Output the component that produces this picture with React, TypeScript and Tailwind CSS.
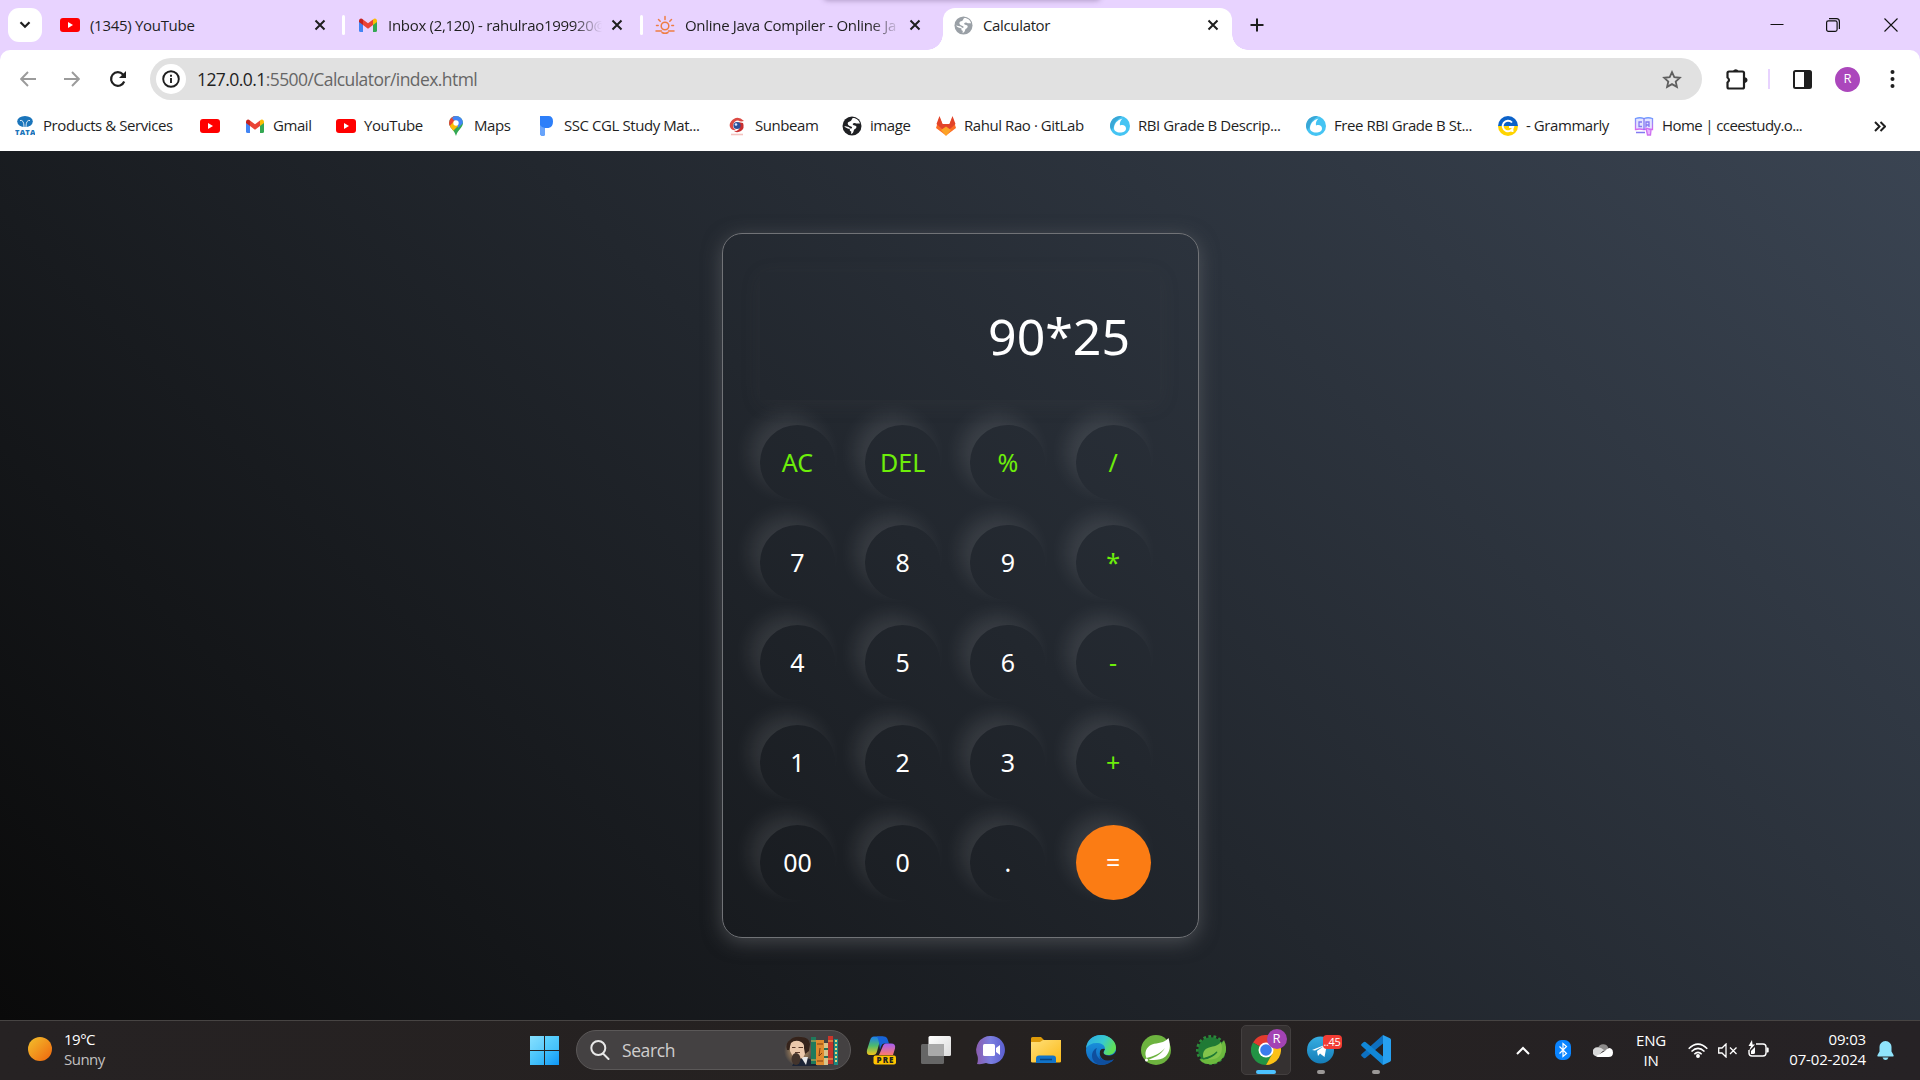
import type { ReactNode } from "react";

const YouTube = () => (
  <svg width="20" height="20" viewBox="0 0 20 20"><rect y="3" width="20" height="14" rx="3" fill="#f00" /><path d="M8 7l5 3-5 3z" fill="#fff" /></svg>
);
const Gmail = () => (
  <svg width="20" height="20" viewBox="0 0 20 20">
    <path d="M1 6v9.500q0 1.500 1.500 1.500H5V9z" fill="#4285f4" />
    <path d="M19 6v9.500q0 1.500-1.500 1.500H15V9z" fill="#34a853" />
    <path d="M5 4.500V10l5 3.700L15 10V4.500l-5 3.800z" fill="#ea4335" />
    <path d="M1 6v1l4 3V4.500C3 2.500 1 4 1 6z" fill="#c5221f" />
    <path d="M19 6v1l-4 3V4.500c2-2 4-.5 4 1.500z" fill="#fbbc04" />
  </svg>
);
const Globe = ({ c, size = 19 }: { c: string; size?: number }) => (
  <svg width={size} height={size} viewBox="0 0 20 20">
    <circle cx="10" cy="10" r="9.500" fill={c} />
    <path d="M11 2c3.500 0 6.300 2.500 7 5.500h-3.500c-.8 0-1.300-.7-2-.6-1.300.2-2 .8-1.700 1.600.3.900 1.700.9 2.700 1.300 1.300.5 1.200 2 .2 2.800-.8.600-1.700 1-1.900 2-.3 1.300-1 3.300-2.800 3.300l.3-2.500c-1.600.2-1.600-1.500-1.500-2.600-1.500.1-4.500-.8-5.600-2.800 1.700.6 3.200.6 4.300.9 1.500.4 1.300 1.600 2.800 1.600.8 0 1.100-1.300.3-1.700-1.500-.7-3.600-1.200-3.900-3C5.500 5.700 7.500 5.800 8.700 5 10 4.200 9.500 2.500 11 2z" fill="#fff" />
  </svg>
);
const JavaSun = () => (
  <svg width="20" height="20" viewBox="0 0 20 20" fill="none" stroke="#ee7d43" strokeWidth="1.500" strokeLinecap="round">
    <circle cx="10" cy="11" r="3.800" />
    <path d="M1 16h5.500M13.500 16H19M7 17.500q3 1.500 6 0M10 1.500v3M3.500 4.500l1.700 1.700M16.500 4.500l-1.700 1.700M1.500 10.500h1.700M16.800 10.500h1.700" />
  </svg>
);
const Tata = () => (
  <svg width="20" height="20" viewBox="0 0 20 20">
    <ellipse cx="10" cy="5.500" rx="7.800" ry="5.500" fill="#1b75bb" />
    <path d="M5 4.500q4-1 4 6.500M15 4.500q-4-1-4 6.500" stroke="#dbeaf6" strokeWidth="1" fill="none" />
    <text x="0" y="18.500" fontSize="7.500" fontWeight="900" textLength="20" fill="#1b75bb" fontFamily="Open Sans, sans-serif">TATA</text>
  </svg>
);
const MapsPin = () => (
  <svg width="20" height="20" viewBox="0 0 20 20">
    <defs><clipPath id="pin"><path d="M10 0a7 7 0 0 1 7 7c0 4.500-5.500 7-7 13-1.500-6-7-8.500-7-13a7 7 0 0 1 7-7z" /></clipPath></defs>
    <g clipPath="url(#pin)">
      <rect width="20" height="20" fill="#34a853" />
      <path d="M0 0h10l0 7-8 9z" fill="#ea4335" />
      <path d="M8 0h12v4L12 12 10 7 6 2z" fill="#4285f4" />
      <path d="M3 11l6-7 3 6-6 6z" fill="#fbbc04" />
    </g>
    <circle cx="10" cy="7" r="2.700" fill="#fff" />
  </svg>
);
const PMark = () => (
  <svg width="20" height="20" viewBox="0 0 20 20"><path d="M4 0h8.500q4.500 0 4.500 5.500T12.500 12H9v6q0 2-2 2-3 0-3-3z" fill="#2d7ff9" /><path d="M4 9q2 3 5 3v6q0 2-2 2-3 0-3-3z" fill="#68a4fb" /></svg>
);
const Sunbeam = () => (
  <svg width="20" height="20" viewBox="0 0 20 20">
    <path d="M4 5.500Q10-1.500 17 5q-3 1-6-.5-4 0-5 5 0 3 3 4.500-4 1-6-3-1-3 1-5.500z" fill="#dc4a43" />
    <path d="M16 7q2 5-2 8-3 2-7 .5 5-.5 6-5 0-3-2-4.500z" fill="#c92f30" />
    <circle cx="10" cy="9.500" r="3.600" fill="#2c4f99" /><circle cx="9" cy="8.500" r="1.300" fill="#dbe6ff" />
    <path d="M4 18.500h12" stroke="#f4c3bf" strokeWidth="1.600" />
  </svg>
);
const GitLab = () => (
  <svg width="20" height="20" viewBox="0 0 20 20">
    <path d="M0 12L3.500 1 6.500 8h7L16.500 1 20 12 10 19.500z" fill="#fc6d26" />
    <path d="M.5 8L3.500 0l3 8h7l3-8 3 8-5 4.500L10 16l-4.500-3.500z" fill="#e24329" />
    <path d="M5 14l5-3.600 5 3.600-5 6z" fill="#fca326" />
  </svg>
);
const Drop = () => (
  <svg width="20" height="20" viewBox="0 0 20 20">
    <circle cx="10" cy="10" r="10" fill="#45c4f3" />
    <path d="M0 10A10 10 0 0 1 12 .3Q5 4 3.500 11l-2 3Q0 12 0 10z" fill="#3aa7d6" />
    <path d="M12.500 2.500C7 4 4 8 4 12.300c0 2.700 2.500 4.200 6 4.200s6-1.300 6-4-2.700-4.300-6-3c-.6-2.500.5-5 2.500-7z" fill="#fff" />
  </svg>
);
const Grammarly = () => (
  <svg width="20" height="20" viewBox="0 0 20 20">
    <path d="M0 10a10 10 0 0 1 20 0z" fill="#0b62c9" /><path d="M0 10a10 10 0 0 0 20 0z" fill="#ffd400" />
    <path d="M14 6.500A5.300 5.300 0 1 0 15.200 11H11M14.500 13.500V16" stroke="#fff" strokeWidth="1.900" fill="none" />
  </svg>
);
const Study = () => (
  <svg width="20" height="20" viewBox="0 0 20 20" fill="none" strokeWidth="1.300">
    <defs><linearGradient id="study" x2="0" y2="1"><stop stopColor="#6f9bff" /><stop offset="1" stopColor="#d66bf0" /></linearGradient></defs>
    <path d="M1.500 2.500Q6 1 10 2.500q4-1.500 8.500 0v11q-4-1-8.500 0-4.500-1-8.500 0z" fill="#e4e4ff" stroke="url(#study)" />
    <path d="M8 6H5v4.500h3M12 11V6h3v5M12 9h3M10 2v12M2 16.500h9" stroke="#8479f2" />
    <path d="M12 12l5 2-.5 5h-3z" fill="#eab5ff" stroke="#cd6ff0" />
  </svg>
);

const CloseX = () => (
  <svg className="shrink-0" width="12" height="12" viewBox="0 0 12 12" stroke="#1f1f1f" strokeWidth="2"><path d="M1.500 1.500l9 9M10.500 1.500l-9 9" /></svg>
);

const tabs = [
  { icon: <YouTube />, title: "(1345) YouTube", box: "w-[288px] pl-2", text: "w-[224px]", fade: false },
  { icon: <Gmail />, title: "Inbox (2,120) - rahulrao199920@", box: "w-[300px] pl-[15px]", text: "w-[223px]", fade: true },
  { icon: <JavaSun />, title: "Online Java Compiler - Online Ja", box: "w-[303px] pl-[12px]", text: "w-[224px]", fade: true },
];

const Tab = ({ icon, title, text, fade }: { icon: ReactNode; title: string; text: string; fade: boolean }) => (
  <>
    <span className="shrink-0">{icon}</span>
    <span className={`ml-[10px] shrink-0 whitespace-nowrap ${text} ${fade ? "[mask-image:linear-gradient(to_right,black_83%,transparent_96%)]" : ""}`}>{title}</span>
    <CloseX />
  </>
);

const bookmarks = [
  { icon: <Tata />, label: "Products & Services", w: "w-[185px]" },
  { icon: <YouTube />, label: "", w: "w-[45px]" },
  { icon: <Gmail />, label: "Gmail", w: "w-[91px]" },
  { icon: <YouTube />, label: "YouTube", w: "w-[110px]" },
  { icon: <MapsPin />, label: "Maps", w: "w-[90px]" },
  { icon: <PMark />, label: "SSC CGL Study Mat...", w: "w-[191px]" },
  { icon: <Sunbeam />, label: "Sunbeam", w: "w-[115px]" },
  { icon: <Globe c="#1f2023" size={20} />, label: "image", w: "w-[94px]" },
  { icon: <GitLab />, label: "Rahul Rao · GitLab", w: "w-[174px]" },
  { icon: <Drop />, label: "RBI Grade B Descrip...", w: "w-[196px]" },
  { icon: <Drop />, label: "Free RBI Grade B St...", w: "w-[192px]" },
  { icon: <Grammarly />, label: "- Grammarly", w: "w-[136px]" },
  { icon: <Study />, label: "Home | cceestudy.o...", w: "w-[200px] tracking-[-0.6px]" },
];

const keys = ["AC", "DEL", "%", "/", "7", "8", "9", "*", "4", "5", "6", "-", "1", "2", "3", "+", "00", "0", ".", "="];
const operators = ["AC", "DEL", "%", "/", "*", "-", "+"];

const keyStyle = (k: string) =>
  k === "=" ? "bg-[#fb7c14] text-white" : operators.includes(k) ? "text-[#6dee0a]" : "text-white";

const Browser = () => (
  <header className="relative h-[151px] overflow-hidden bg-[#e8d3ff] text-[15px] text-[#1f1f1f]">
    <i className="absolute -top-2 left-[824px] h-2 w-[276px] rounded shadow-[0_0_5px_1px_rgba(80,60,100,0.35)]" />
    <div className="flex h-[50px] items-center">
      <div className="ml-2 flex h-[34px] w-[34px] shrink-0 items-center justify-center rounded-[11px] bg-white">
        <svg width="12" height="8" viewBox="0 0 12 8" fill="none" stroke="#1f1f1f" strokeWidth="2.200"><path d="M1.500 1.200L6 5.800l4.500-4.600" /></svg>
      </div>
      <div className="w-[10px] shrink-0" />
      {tabs.map((t, i) => (
        <div key={t.title} className={`flex h-full shrink-0 items-center tracking-[-0.3px] ${t.box}`}>
          {i > 0 && <i className={`h-5 w-[3px] shrink-0 rounded bg-white ${i === 1 ? "-ml-[13px] mr-[13px]" : "-ml-[12px] mr-[12px]"}`} />}
          <Tab icon={t.icon} title={t.title} text={t.text} fade={t.fade} />
        </div>
      ))}
      <div className="relative h-[42px] w-[289px] shrink-0 self-end rounded-t-[12px] bg-white">
        <i className="absolute -left-4 bottom-0 h-4 w-4 bg-[radial-gradient(circle_at_0_0,transparent_15.500px,white_16px)]" />
        <i className="absolute -right-4 bottom-0 h-4 w-4 bg-[radial-gradient(circle_at_100%_0,transparent_15.500px,white_16px)]" />
        <div className="flex h-[34px] items-center pl-[11px] tracking-[-0.35px]">
          <Tab icon={<Globe c="#9aa0a6" />} title="Calculator" text="w-[224px]" fade={false} />
        </div>
      </div>
      <svg className="ml-[18px]" width="14" height="14" viewBox="0 0 14 14" stroke="#1f1f1f" strokeWidth="2"><path d="M7 .5v13M.5 7h13" /></svg>
      <div className="ml-auto flex items-center pr-[22px]">
        <svg width="14" height="14" viewBox="0 0 14 14" stroke="#111"><path d="M.5 6.500h13" /></svg>
        <svg className="ml-[42px] mr-[44px]" width="14" height="14" viewBox="0 0 14 14" fill="none" stroke="#111" strokeWidth="1.200"><rect x=".6" y="2.800" width="10.500" height="10.500" rx="1.800" /><path d="M3 .7h7.500q2.900 0 2.900 3v7.300" /></svg>
        <svg width="14" height="14" viewBox="0 0 14 14" stroke="#111" strokeWidth="1.100"><path d="M.5.5l13 13M13.500.5l-13 13" /></svg>
      </div>
    </div>
    <div className="h-[101px] rounded-t-[10px] bg-white">
      <div className="flex h-[58px] items-center">
        <svg className="ml-5" width="16" height="16" viewBox="0 0 16 16" fill="none" stroke="#9b9b9b" strokeWidth="1.900"><path d="M16 8H1.500M8 1L1.200 8 8 15" /></svg>
        <svg className="ml-[28px]" width="16" height="16" viewBox="0 0 16 16" fill="none" stroke="#9b9b9b" strokeWidth="1.900"><path d="M0 8h14.500M8 1l6.800 7L8 15" /></svg>
        <svg className="ml-[29px]" width="18" height="18" viewBox="0 0 18 18" fill="none" stroke="#1f1f1f" strokeWidth="2.200"><path d="M15.200 11.500A6.800 6.800 0 1 1 14 4.500L15.500 6" /><path d="M17 1v7h-7z" fill="#1f1f1f" stroke="none" /></svg>
        <div className="ml-[23px] flex h-[42px] w-[1552px] items-center rounded-full bg-[#e1e1e1] pl-[6px] text-[17.500px]">
          <div className="flex h-[30px] w-[30px] items-center justify-center rounded-full bg-white">
            <svg width="18" height="18" viewBox="0 0 18 18" fill="none" stroke="#1f1f1f" strokeWidth="1.900"><circle cx="9" cy="9" r="7.800" /><path d="M9 8v5M9 4.700v2" /></svg>
          </div>
          <span className="ml-[11px] whitespace-nowrap tracking-[-0.57px]">127.0.0.1<span className="text-[#666]">:5500/Calculator/index.html</span></span>
          <svg className="ml-auto mr-5" width="20" height="19" viewBox="0 0 20 19" fill="none" stroke="#5f5f5f" strokeWidth="1.800"><path d="M10 2.200l2.300 5 5.500.6-4.100 3.700 1.200 5.400L10 14.100l-4.900 2.800 1.200-5.400-4.100-3.700 5.500-.6z" /></svg>
        </div>
        <svg className="ml-[24px]" width="22" height="22" viewBox="0 0 22 22" fill="#1f1f1f"><path d="M3 3.500h13.500a1.500 1.500 0 0 1 1.500 1.500v14a1.500 1.500 0 0 1-1.500 1.500H3A1.500 1.500 0 0 1 1.500 19v-4.500q3-2.500 0-5V5A1.500 1.500 0 0 1 3 3.500z" fill="none" stroke="#1f1f1f" strokeWidth="2.200" /><path d="M7 3a3 3 0 0 1 5.500 0zM18 9q3.500.5 3.500 3T18 15z" /></svg>
        <i className="ml-[20px] h-5 w-[2px] bg-[#e8d3ff]" />
        <svg className="ml-[23px]" width="19" height="19" viewBox="0 0 19 19"><rect x="1" y="1" width="17" height="17" rx="1.500" fill="none" stroke="#1f1f1f" strokeWidth="2" /><path d="M11 1h7v17h-7z" fill="#1f1f1f" /></svg>
        <div className="ml-[23px] flex h-[25px] w-[25px] items-center justify-center rounded-full bg-[#ab47bc] text-[13px] text-white">R</div>
        <svg className="ml-[30px]" width="5" height="18" viewBox="0 0 5 18" fill="#1f1f1f"><circle cx="2.500" cy="2" r="2" /><circle cx="2.500" cy="9" r="2" /><circle cx="2.500" cy="16" r="2" /></svg>
      </div>
      <div className="flex h-[36px] items-center pl-[15px]">
        {bookmarks.map((b, i) => (
          <div key={i} className={`flex shrink-0 items-center gap-2 whitespace-nowrap ${i < 12 ? "tracking-[-0.43px]" : ""} ${b.w}`}>
            <span className="shrink-0">{b.icon}</span>
            <span className="-mt-[2px]">{b.label}</span>
          </div>
        ))}
        <svg className="ml-[40px]" width="12" height="11" viewBox="0 0 12 11" fill="none" stroke="#1f1f1f" strokeWidth="2"><path d="M1 1l4.500 4.500L1 10M6.500 1L11 5.500 6.500 10" /></svg>
      </div>
    </div>
  </header>
);

const Calculator = () => (
  <main className="flex h-[869px] items-center justify-center bg-[linear-gradient(45deg,#0a0a0a,#3a4452)] pl-px font-['Noto_Sans',sans-serif]">
    <section className="h-[705px] w-[477px] rounded-[20px] border border-[#717377] px-[37px] pt-[38px] shadow-[0_4px_19px_rgba(113,115,119,0.5)]">
      <div className="flex h-[128px] w-[400px] items-center justify-end pr-[30px] text-[50px] text-white shadow-[0_4px_19px_rgba(84,84,84,0.14)]">90*25</div>
      <div className="mt-[25px] grid grid-cols-[repeat(4,75px)] gap-x-[30.200px] gap-y-[25px]">
        {keys.map((k) => (
          <button key={k} className={`h-[75px] w-[75px] rounded-full text-[25px] shadow-[-10px_-10px_19px_rgba(255,255,255,0.1)] ${keyStyle(k)}`}>{k}</button>
        ))}
      </div>
    </section>
  </main>
);

const Portrait = () => (
  <svg width="56" height="32" viewBox="0 0 56 32">
    <defs><radialGradient id="halo"><stop offset=".6" stopColor="#a5835c" stopOpacity=".7" /><stop offset="1" stopColor="#a5835c" stopOpacity="0" /></radialGradient></defs>
    <circle cx="15" cy="16" r="15" fill="url(#halo)" />
    <path d="M8 31q3-7 11-8 9-1 14 8z" fill="#1c2436" />
    <path d="M17 22l5 8 2-8z" fill="#e8e8e8" />
    <path d="M6 7q7-5 14-1l3 9-4 8-9 1-4-8z" fill="#ecc9ac" />
    <path d="M3 15Q1 8 6 5q4-4 11-3 8 0 9 7l-1 7-4 3-1-6q1-5-5-7-5-1-8 2l-2 7z" fill="#35231b" />
    <path d="M8 12.500h3.500M14.500 12.500H19M11 17.500h5" stroke="#5b3a2b" strokeWidth="1.200" />
    <ellipse cx="12" cy="24" rx="4.500" ry="6" fill="#43342c" />
    <rect x="27" y="2" width="5" height="27" fill="#1f7a5c" /><path d="M27 6h5M27 25h5" stroke="#e4b04d" />
    <rect x="32" y="5" width="8" height="25" fill="#e08b2e" /><path d="M33 9h6M33 26h6" stroke="#7d3c12" /><path d="M36 13l-1 8 3-3" stroke="#7d3c12" fill="none" />
    <rect x="40" y="8" width="4" height="22" fill="#d8c38b" /><path d="M40 14h4M40 22h4" stroke="#24715a" strokeWidth="2" />
    <rect x="44" y="1" width="5" height="28" fill="#c7362b" /><path d="M44 6h5M44 24h5" stroke="#f0c050" />
    <path d="M50 4h4v26h-4z" fill="#1d8a80" /><path d="M52 5v24" stroke="#ecd27a" strokeWidth="2" strokeDasharray="2 2" />
  </svg>
);

const appIcons: { icon: ReactNode; active?: boolean; open?: boolean; badge?: ReactNode }[] = [
  {
    icon: (
      <svg width="30" height="30" viewBox="0 0 30 30">
        <defs>
          <linearGradient id="coA" x2="0" y2="1"><stop stopColor="#1a7df0" /><stop offset=".5" stopColor="#4dbb6c" /><stop offset="1" stopColor="#f5c518" /></linearGradient>
          <linearGradient id="coB" x2="0" y2="1"><stop stopColor="#a45df5" /><stop offset="1" stopColor="#ff7a6b" /></linearGradient>
        </defs>
        <path d="M8 1.500h10q-3 .5-4 4l-3 11q-1 3.500-4 3.500H4q-4 0-3-5l3-9.500q1-4 4-4z" fill="url(#coA)" />
        <path d="M11 1.500h7q3 0 4 4l1 3h-5q-2 0-3 3l-1 3q-1-9-3-13z" fill="#1763d8" />
        <path d="M20 8.500h5q5 0 4 5l-2 6.500H13l3.500-8q1-3.500 3.500-3.500z" fill="url(#coB)" />
        <rect x="7.500" y="20.500" width="22.500" height="9" rx="2" fill="#ffc400" />
        <text x="10.500" y="28" fontSize="8" fontWeight="800" textLength="17" fill="#222" fontFamily="Open Sans, sans-serif">PRE</text>
      </svg>
    ),
  },
  {
    icon: (
      <svg width="30" height="30" viewBox="0 0 30 30">
        <defs><linearGradient id="tv" x2="1" y2="1"><stop stopColor="#fff" /><stop offset="1" stopColor="#dcdcdc" /></linearGradient></defs>
        <rect x="0" y="9" width="23" height="20" rx="1.500" fill="#666" /><rect x="7.500" y="1" width="22.500" height="20" rx="1.500" fill="url(#tv)" /><path d="M7.500 9H23v12H7.500z" fill="#a9a9a9" />
      </svg>
    ),
  },
  {
    icon: (
      <svg width="30" height="30" viewBox="0 0 30 30">
        <defs><linearGradient id="chat" x1="0" x2="1"><stop stopColor="#8a5cae" /><stop offset=".5" stopColor="#7b7fe0" /><stop offset="1" stopColor="#5b5fd0" /></linearGradient></defs>
        <path d="M15 1a14 14 0 1 1-5 27.100Q6 29.500 1 29q1.500-4 .5-8A14 14 0 0 1 15 1z" fill="url(#chat)" />
        <rect x="7" y="9" width="12" height="12" rx="1.500" fill="#fff" /><path d="M20 13l4-3v10l-4-3z" fill="#fff" />
      </svg>
    ),
  },
  {
    icon: (
      <svg width="30" height="30" viewBox="0 0 30 30">
        <defs><linearGradient id="fold" x2="1" y2="1"><stop stopColor="#ffe07a" /><stop offset="1" stopColor="#fbb917" /></linearGradient></defs>
        <path d="M0 3.500Q0 2 1.500 2H10l3 3h17v6H0z" fill="#dd9a09" /><path d="M0 7h9l3-2h18v21.500q0 1-1.500 1H1.500q-1.500 0-1.500-1z" fill="url(#fold)" />
        <path d="M5 28v-4.500q0-3 3-3h14q3 0 3 3V28z" fill="#1173c8" /><path d="M9 24.500h12" stroke="#07437f" strokeWidth="1.500" />
      </svg>
    ),
  },
  {
    icon: (
      <svg width="30" height="30" viewBox="0 0 30 30">
        <defs>
          <linearGradient id="edA" x2="1" y2=".4"><stop stopColor="#2aa9e8" /><stop offset=".6" stopColor="#38c9cf" /><stop offset="1" stopColor="#5fe05a" /></linearGradient>
          <linearGradient id="edB" x2="0" y2="1"><stop stopColor="#1b9de2" /><stop offset="1" stopColor="#1165c1" /></linearGradient>
        </defs>
        <circle cx="15" cy="15" r="15" fill="url(#edB)" />
        <path d="M0 13C1 5 7 0 15 0s15 6 15 12.500c0 5-4 7.500-8 7.500-3 0-4.500-1.300-4.500-2.300 0-.8 1.500-1.700 1.500-4C19 10 15 8 10.500 8 6 8 2 10 0 13z" fill="url(#edA)" />
        <path d="M11 13c-2 3-1 9 4 12 4 2.500 9 1.500 13-1-3 4-7.500 6-13 6C9 29 6 25 6 21c0-4 2-7 5-8z" fill="#0f4f9e" />
        <path d="M17.500 17.500c0 2 3 3.500 6.500 3 3-.5 5-2 6-4.500v7l-2 1.500q-7 3-11 0-4-3-3-8.500 1-3 5-2-1 1-1.500 3.500z" fill="#262221" />
        <path d="M13 18c0 6 7 10 15 6l-2 2.500q-8 3-12-2z" fill="#0f4f9e" />
      </svg>
    ),
  },
  {
    icon: (
      <svg width="30" height="30" viewBox="0 0 30 30">
        <circle cx="15" cy="15" r="15" fill="#6db33f" />
        <path d="M27.500 3c2.500 8 1.500 14-3 18.500-4.500 4-11.500 3.500-17 3.200C12 23 19 21 24 13c-5 6-11 8-18.500 10C3 18 5 12 11 9.500c6-2 12-1 16.500-6.500z" fill="#fff" />
        <circle cx="5.500" cy="25" r="1.500" fill="#fff" />
      </svg>
    ),
  },
  {
    icon: (
      <svg width="30" height="30" viewBox="0 0 30 30">
        <circle cx="15" cy="15" r="13.500" fill="none" stroke="#2c8a3a" strokeWidth="3" strokeDasharray="2.700 2.350" />
        <circle cx="15" cy="15" r="12.800" fill="#1f7a35" />
        <path d="M28 5q5 11-2 19-8 8-18 4-3-1-4-4 8 1 14-3z" fill="#6cb83e" />
        <path d="M25 7c2 7 1 13-4 16-4 2-9 1.500-13 1.500 6-1.500 11-4 14-9-4 4-9 6-14.500 7.500C6 18 8 14 13 12.500 18 11 22 11 25 7z" fill="#82c44b" />
        <path d="M7 24q9-1 14-7" stroke="#1f7a35" strokeWidth="1.200" fill="none" />
      </svg>
    ),
  },
  {
    active: true,
    icon: (
      <svg width="30" height="30" viewBox="0 0 30 30">
        <path d="M15 15L2 7.500A15 15 0 0 1 28 7.500z" fill="#e33b2e" />
        <path d="M15 15L2 7.500A15 15 0 0 0 15 30l6-10z" fill="#229344" />
        <path d="M15 8h13.300A15 15 0 0 1 15 30l6.200-11z" fill="#fbc116" />
        <circle cx="15" cy="15" r="7.500" fill="#fff" /><circle cx="15" cy="15" r="5.800" fill="#3a7cec" />
      </svg>
    ),
    badge: <b className="absolute left-[25px] top-[3px] flex h-5 w-5 items-center justify-center rounded-full bg-[#a343b4] text-[13px] font-normal text-white">R</b>,
  },
  {
    open: true,
    icon: (
      <svg width="30" height="30" viewBox="0 0 30 30">
        <defs><linearGradient id="tg" x2="0" y2="1"><stop stopColor="#37aee2" /><stop offset="1" stopColor="#157db8" /></linearGradient></defs>
        <circle cx="14.500" cy="15" r="13.500" fill="url(#tg)" /><path d="M6 15l15-6-2.500 13-4.500-3.500-2 2.500-1-5 7-5-9 4.500z" fill="#fff" />
      </svg>
    ),
    badge: <b className="absolute left-[27px] top-[10px] flex h-[14px] w-[19px] items-center justify-center rounded-[4px] bg-[#f23c34] text-[11px] font-normal tracking-[-0.3px] text-white">..45</b>,
  },
  {
    open: true,
    icon: (
      <svg width="30" height="30" viewBox="0 0 30 30">
        <path d="M22 0v8.500L4.500 23q-1 .8-2-.2L.5 21q-.8-1 .2-2z" fill="#0e70c0" />
        <path d="M22 30v-8.500L4.500 7q-1-.8-2 .2L.5 9q-.8 1 .2 2z" fill="#1187d6" />
        <path d="M22 0l7 3.200q1 .6 1 1.800v20q0 1.200-1 1.800L22 30z" fill="#27a0f0" />
      </svg>
    ),
  },
];

const Taskbar = () => (
  <footer className="flex h-[60px] items-center border-t border-[#474443] bg-[linear-gradient(90deg,#262223,#252120_50%,#262225)] pb-px text-[15px] text-white">
    <div className="-mt-[2px] ml-[28px] h-6 w-6 shrink-0 rounded-full bg-linear-to-br from-[#f0c02c] to-[#ee620c]" />
    <div className="-mt-[3px] ml-[12px] w-[466px] shrink-0 leading-[20px] tracking-[-0.5px]">
      <div>19°C</div>
      <div className="text-[#c2c0c0]">Sunny</div>
    </div>
    <div className="grid h-[29px] w-[29px] shrink-0 grid-cols-2 gap-px">
      <i className="bg-linear-to-br from-[#85e0ff] to-[#5ccbfb]" /><i className="bg-linear-to-br from-[#60d4fe] to-[#3fbefa]" />
      <i className="bg-linear-to-br from-[#5ad0fd] to-[#2fb2f8]" /><i className="bg-linear-to-br from-[#3fc0fb] to-[#0a97f5]" />
    </div>
    <div className="ml-[17px] flex h-10 w-[275px] shrink-0 items-center rounded-full border border-[#5b5858] bg-[#444142] pl-[13px]">
      <svg width="20" height="20" viewBox="0 0 20 20" fill="none" stroke="#e8e8e8" strokeWidth="2"><circle cx="8.300" cy="8" r="7" /><path d="M13 13.500l5.500 5.500" strokeLinecap="round" /></svg>
      <span className="ml-[12px] text-[17.500px] tracking-[-0.4px] text-[#d0cece]">Search</span>
      <span className="ml-auto mr-[10px] pt-[2px]"><Portrait /></span>
    </div>
    <div className="ml-[2px] flex shrink-0">
      {appIcons.map((a, i) => (
        <div key={i} className="flex w-[55px] justify-center">
          <div className={`relative flex h-[50px] w-[50px] items-center justify-center rounded-[5px] ${a.active ? "border border-[#433f3f] bg-[#353131]" : ""}`}>
            {a.icon}
            {a.badge}
            {a.active && <i className="absolute bottom-0 left-[14px] h-1 w-5 rounded-full bg-[#4cc2ff]" />}
            {a.open && <i className="absolute bottom-px left-[21px] h-1 w-2 rounded-full bg-[#9b9897]" />}
          </div>
        </div>
      ))}
    </div>
    <div className="ml-auto flex shrink-0 items-center">
      <svg width="14" height="9" viewBox="0 0 14 9" fill="none" stroke="#fff" strokeWidth="2"><path d="M1 8l6-6 6 6" /></svg>
      <svg className="ml-[25px]" width="16" height="20" viewBox="0 0 16 20"><rect width="16" height="20" rx="6.500" fill="#0a84ff" /><path d="M4.500 6.500l7 7L8 16.500v-13l3.500 3-7 7" fill="none" stroke="#fff" strokeWidth="1.200" /></svg>
      <svg className="ml-[22px]" width="20" height="14" viewBox="0 0 20 14"><path d="M5 5a5.500 5.500 0 0 1 10.300-.5L12 9z" fill="#8d8b8b" /><path d="M4.500 4.200Q8 4 11 7l-7 6.500a4.600 4.600 0 0 1 .5-9.300z" fill="#d8d8d8" /><path d="M3 13l9-5q3-4 6-2.500 2 1 2 4 0 4.500-4.500 4.500h-11z" fill="#fff" /></svg>
      <div className="-mt-px ml-[22px] w-[32px] text-center leading-[20px] tracking-[-0.2px]">ENG<br />IN</div>
      <svg className="ml-[21px]" width="20" height="15" viewBox="0 0 20 15" fill="none" stroke="#fff" strokeWidth="1.500"><path d="M.7 5.700Q10-3.500 19.300 5.700M3.500 8.500q6.500-6.300 13 0M6.300 11.200q3.700-3.600 7.400 0" /><circle cx="10" cy="13" r="1.200" fill="#fff" /></svg>
      <svg className="ml-[10px]" width="20" height="15" viewBox="0 0 20 15" fill="none" stroke="#fff" strokeWidth="1.300"><path d="M.7 5H4l4-4v13l-4-4H.7zM12 4.500l6.500 6.500M18.500 4.500L12 11" /></svg>
      <svg className="-mt-[3px] ml-[10px]" width="21" height="17" viewBox="0 0 21 17"><path d="M8 4h7q3 0 3 3v6q0 3-3 3H4q-3 0-3-3v-3" fill="none" stroke="#fff" strokeWidth="1.400" /><path d="M18.500 7.500h1.200q1 0 1 1v3q0 1-1 1h-1.200zM4 0L.5 6H3L1 11l6-6.500H4.500zM3 14V11l4-4v5.500q0 1.500-1.500 1.500z" fill="#fff" /></svg>
      <div className="-mt-[3px] ml-[13px] w-[84px] text-right leading-[20px] tracking-[-0.15px]">09:03<br />07-02-2024</div>
      <svg className="ml-[11px] mr-[26px]" width="17" height="19" viewBox="0 0 17 19" fill="#8fe3fb"><path d="M8.500 0a6 6 0 0 1 6 6.500v4l2 3.500q.5 1.500-1 1.500h-14q-1.500 0-1-1.500l2-3.500v-4a6 6 0 0 1 6-6.500zM5.500 16.500h6q-1 2.500-3 2.500t-3-2.500z" /></svg>
    </div>
  </footer>
);

export default function App() {
  return (
    <div className="h-[1080px] w-[1920px] overflow-hidden font-['Open_Sans',sans-serif]">
      <Browser />
      <Calculator />
      <Taskbar />
    </div>
  );
}
